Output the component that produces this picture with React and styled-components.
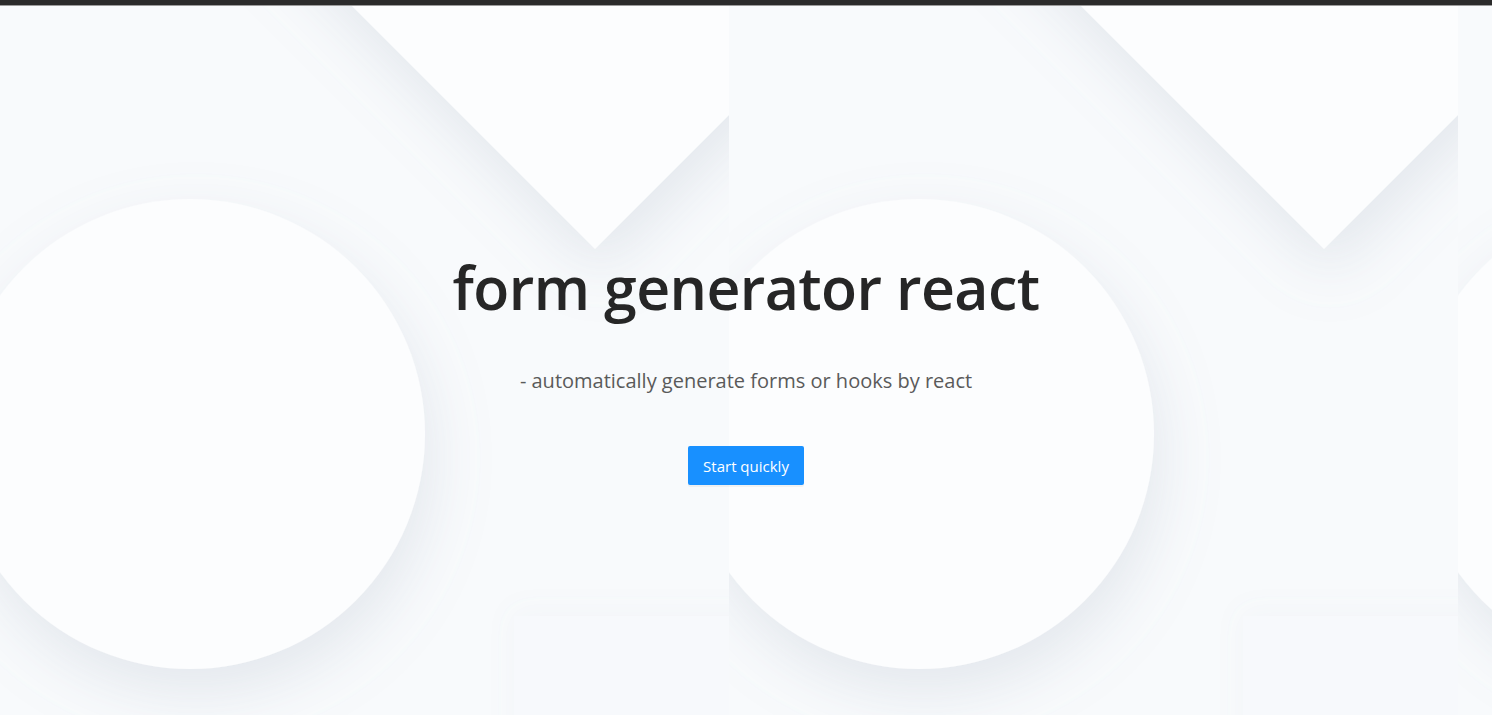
import React from 'react';
import styled, { createGlobalStyle } from 'styled-components';

const GlobalStyle = createGlobalStyle`
  html, body {
    margin: 0;
    padding: 0;
    background: #f8fafc;
    font-family: "Open Sans", "Noto Sans", "Liberation Sans", sans-serif;
    overflow: hidden;
  }
  * { box-sizing: border-box; }
`;

const Page = styled.div`
  min-height: 100vh;
  display: flex;
  flex-direction: column;
`;

const TopBar = styled.div`
  height: 6px;
  background: #2b2b2b;
  border-bottom: 1px solid #9c9c9c;
  flex-shrink: 0;
`;

const Hero = styled.section`
  position: relative;
  flex: 1;
  background: #f8fafc;
  overflow: hidden;
`;

// decorative pattern behind the hero, in page coordinates
const Backdrop = styled.svg`
  position: absolute;
  top: -7px;
  left: 0;
  width: 100%;
  height: calc(100% + 7px);
  z-index: 0;
`;

const Content = styled.div`
  position: relative;
  z-index: 1;
  display: flex;
  flex-direction: column;
  align-items: center;
  padding-top: 241px;
`;

const Title = styled.h1`
  margin: 0;
  font-size: 59px;
  line-height: 80px;
  font-weight: 600;
  color: #262626;
  letter-spacing: -0.6px;
`;

const Subtitle = styled.p`
  margin: 40px 0 0;
  font-size: 20px;
  line-height: 28px;
  color: #5a5a5a;
`;

const StartButton = styled.button`
  margin-top: 51px;
  height: 39px;
  padding: 0 15px;
  border: none;
  border-radius: 2px;
  background: #1890ff;
  color: #fff;
  font-family: inherit;
  font-size: 15px;
  cursor: pointer;
  box-shadow: 0 2px 0 rgba(0, 0, 0, 0.045);

  &:hover {
    background: #40a9ff;
  }
`;

const TILE = 729;

function Tile({ x }) {
  return (
    <g transform={`translate(${x} 0)`} clipPath="url(#tile-clip)">
      <polygon
        points="595,250 195,-150 595,-550 995,-150"
        fill="#fcfdfe"
        filter="url(#soft-shadow)"
      />
      <rect x="514" y="617" width="260" height="200" fill="#f7f9fc" filter="url(#rect-shadow)" />
      <circle cx="190" cy="435" r="235" fill="#fcfdfe" filter="url(#soft-shadow)" />
    </g>
  );
}

function App() {
  return (
    <Page>
      <GlobalStyle />
      <TopBar />
      <Hero>
        <Backdrop preserveAspectRatio="xMinYMin slice" aria-hidden="true">
          <defs>
            <clipPath id="tile-clip">
              <rect x="0" y="0" width={TILE} height="1000" />
            </clipPath>
            <filter id="soft-shadow" x="-40%" y="-40%" width="180%" height="180%">
              <feGaussianBlur in="SourceAlpha" stdDeviation="30" />
              <feOffset dx="6" dy="24" result="blur" />
              <feFlood floodColor="#8593a8" floodOpacity="0.18" />
              <feComposite in2="blur" operator="in" result="shadow" />
              <feMerge>
                <feMergeNode in="shadow" />
                <feMergeNode in="SourceGraphic" />
              </feMerge>
            </filter>
            <filter id="rect-shadow" x="-40%" y="-40%" width="180%" height="180%">
              <feGaussianBlur in="SourceAlpha" stdDeviation="14" />
              <feOffset dx="0" dy="-4" result="blur" />
              <feFlood floodColor="#8593a8" floodOpacity="0.05" />
              <feComposite in2="blur" operator="in" result="shadow" />
              <feMerge>
                <feMergeNode in="shadow" />
                <feMergeNode in="SourceGraphic" />
              </feMerge>
            </filter>
          </defs>
          {[0, TILE, TILE * 2].map((x) => (
            <Tile key={x} x={x} />
          ))}
        </Backdrop>
        <Content>
          <Title>form generator react</Title>
          <Subtitle>- automatically generate forms or hooks by react</Subtitle>
          <StartButton type="button">Start quickly</StartButton>
        </Content>
      </Hero>
    </Page>
  );
}

export default App;
